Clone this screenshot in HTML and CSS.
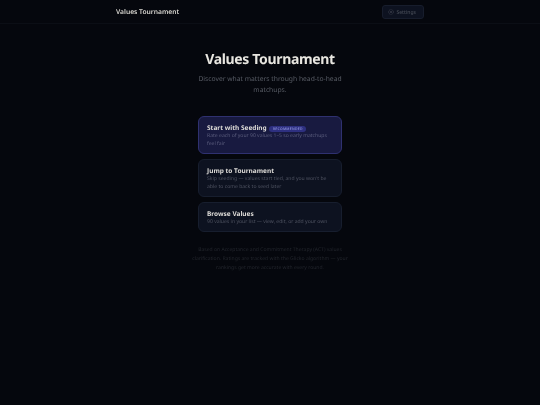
FILE: index.html
```html
<!DOCTYPE html>
<html lang="en">
<head>
<meta charset="utf-8">
<title>Values Tournament</title>
<link rel="stylesheet" href="styles.css">
</head>
<body>
<div class="page">
<header class="topbar">
  <div class="topbar-inner">
    <span class="brand">Values Tournament</span>
    <button class="settings">
      <svg class="gear" viewBox="0 0 24 24" fill="none" stroke="currentColor" stroke-width="2.500"><circle cx="12" cy="12" r="3"/><circle cx="12" cy="12" r="9.500" stroke-dasharray="4 1.500"/></svg>
      <span>Settings</span>
    </button>
  </div>
</header>
<main class="main">
  <h1 class="title">Values Tournament</h1>
  <p class="subtitle">Discover what matters through head-to-head matchups.</p>
  <div class="cards">
    <div class="card card-primary">
      <div class="card-title">Start with Seeding <span class="badge">RECOMMENDED</span></div>
      <div class="card-desc">Rate each of your 90 values 1–5 so early matchups feel fair</div>
    </div>
    <div class="card">
      <div class="card-title">Jump to Tournament</div>
      <div class="card-desc">Skip seeding — values start tied, and you won't be able to come back to seed later</div>
    </div>
    <div class="card">
      <div class="card-title">Browse Values</div>
      <div class="card-desc">90 values in your list — view, edit, or add your own</div>
    </div>
  </div>
  <p class="footnote">Based on Acceptance and Commitment Therapy (ACT) values clarification. Ratings are tracked with the Glicko algorithm — your rankings get more accurate with every round.</p>
</main>
</div>
</body>
</html>
```
FILE: styles.css
```css
* { box-sizing: border-box; }
html, body { margin: 0; height: 100%; }
body {
  background: #05070d;
  overflow: hidden;
}
.page {
  height: 100%;
  font-family: "Noto Sans", sans-serif;
  text-rendering: geometricPrecision;
  color: #e8e6e0;
  will-change: opacity;
}
.topbar { height: 24px; border-bottom: 1px solid #0b0e15; }
.topbar-inner {
  width: 308px;
  height: 100%;
  margin: 0 auto;
  display: flex;
  align-items: center;
  justify-content: space-between;
}
.brand { padding-top: 1px; font-size: 6.700px; line-height: 10px; font-weight: 600; color: #d8d6d0; }
.settings {
  display: flex;
  align-items: center;
  gap: 2.500px;
  width: 42px;
  height: 14px;
  padding: 0 0 0 5px;
  background: #0d1220;
  border: 1px solid #171d2c;
  border-radius: 3px;
  color: #454a55;
  font: 500 5px "Noto Sans", sans-serif;
}
.gear { width: 6px; height: 6px; flex: none; }
.main { width: 176px; margin: 0 auto; display: flex; flex-direction: column; align-items: center; }
.title { margin: 27px 0 0; font-size: 14px; line-height: 18px; font-weight: 700; letter-spacing: -.35px; color: #e8e6e0; white-space: nowrap; }
.subtitle { margin: 3.500px 0 0; width: 150px; text-align: center; font-size: 6.750px; line-height: 11px; color: #585c65; }
.cards { margin-top: 21.500px; width: 144px; display: flex; flex-direction: column; gap: 5px; }
.card {
  padding: 6px 8px 5px;
  background: #0d1220;
  border: 1px solid #171e2e;
  border-radius: 6px;
}
.card-primary { background: #181a40; border-color: #2f3170; }
.card-title { font-size: 6.500px; line-height: 9px; font-weight: 700; color: #dedcd8; white-space: nowrap; }
.card-desc { font-size: 5.080px; line-height: 8px; color: #4e5260; }
.card-primary .card-desc { color: #5a5c7c; }
.badge {
  display: inline-block;
  margin-left: 1px;
  padding: 0 3.500px;
  font-size: 3.400px;
  line-height: 6px;
  font-weight: 600;
  letter-spacing: .3px;
  vertical-align: .5px;
  border-radius: 3px;
  background: #2e3080;
  color: #8a8ed8;
}
.footnote { margin: 14.250px 0 0; width: 162px; text-align: center; font-size: 5.060px; line-height: 8.750px; color: #23262d; }
```
